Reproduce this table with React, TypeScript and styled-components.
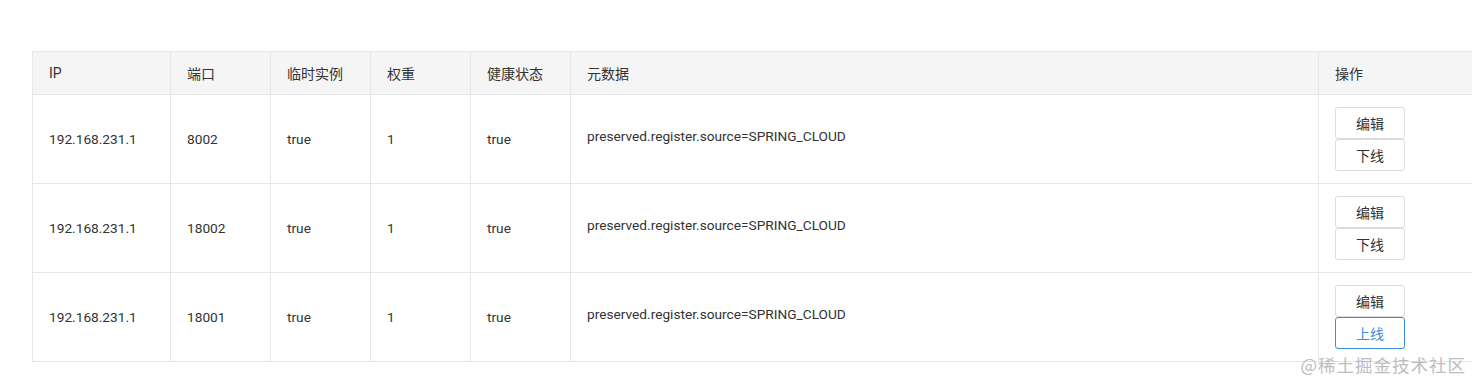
import styled, { createGlobalStyle } from "styled-components";

interface InstanceType {
  ip: string;
  port: number;
  ephemeral: boolean;
  weight: number;
  healthy: boolean;
  metadata: string;
  enabled: boolean;
}

const instances: InstanceType[] = [
  { ip: "192.168.231.1", port: 8002, ephemeral: true, weight: 1, healthy: true, metadata: "preserved.register.source=SPRING_CLOUD", enabled: true },
  { ip: "192.168.231.1", port: 18002, ephemeral: true, weight: 1, healthy: true, metadata: "preserved.register.source=SPRING_CLOUD", enabled: true },
  { ip: "192.168.231.1", port: 18001, ephemeral: true, weight: 1, healthy: true, metadata: "preserved.register.source=SPRING_CLOUD", enabled: false },
];

const columns = [
  { title: "IP", width: 138 },
  { title: "端口", width: 100 },
  { title: "临时实例", width: 100 },
  { title: "权重", width: 100 },
  { title: "健康状态", width: 100 },
  { title: "元数据", width: 748 },
  { title: "操作", width: 200 },
];

const GlobalStyle = createGlobalStyle`
  html, body {
    margin: 0;
    padding: 0;
    background: #ffffff;
    overflow: hidden;
  }
  body {
    font-family: Roboto, "Noto Sans CJK SC", sans-serif;
    color: #333333;
  }
`;

export default function App() {
  return (
    <Page>
      <GlobalStyle />
      <Table>
        <colgroup>
          {columns.map((col) => (
            <col key={col.title} style={{ width: col.width }} />
          ))}
        </colgroup>
        <thead>
          <tr>
            {columns.map((col) => (
              <HeadCell key={col.title}>{col.title}</HeadCell>
            ))}
          </tr>
        </thead>
        <tbody>
          {instances.map((item) => (
            <tr key={item.port}>
              <Cell>{item.ip}</Cell>
              <Cell>{item.port}</Cell>
              <Cell>{String(item.ephemeral)}</Cell>
              <Cell>{item.weight}</Cell>
              <Cell>{String(item.healthy)}</Cell>
              <Cell>
                <Metadata>{item.metadata}</Metadata>
              </Cell>
              <Cell>
                <Actions>
                  <ActionButton>编辑</ActionButton>
                  <ActionButton $primary={!item.enabled}>
                    {item.enabled ? "下线" : "上线"}
                  </ActionButton>
                </Actions>
              </Cell>
            </tr>
          ))}
        </tbody>
      </Table>
      <Watermark>@稀土掘金技术社区</Watermark>
    </Page>
  );
}

const Page = styled.div`
  position: relative;
  width: 1472px;
  height: 384px;
  padding: 51px 0 0 32px;
  box-sizing: border-box;
  overflow: hidden;
`;

const Table = styled.table`
  width: 1486px;
  table-layout: fixed;
  border-collapse: collapse;
  font-size: 13.7px;
`;

const HeadCell = styled.th`
  height: 43px;
  padding: 0 16px;
  box-sizing: border-box;
  background: #f5f5f5;
  border: 1px solid #e6e6e6;
  font-weight: normal;
  font-size: 14px;
  text-align: left;
  color: #333333;
  font-family: Roboto, "Noto Sans CJK SC", sans-serif;
`;

const Cell = styled.td`
  height: 89px;
  padding: 0 16px 1px;
  box-sizing: border-box;
  border: 1px solid #e6e6e6;
  vertical-align: middle;
  color: #333333;
`;

const Metadata = styled.div`
  padding-bottom: 6px;
`;

const Actions = styled.div`
  display: flex;
  flex-direction: column;
  align-items: flex-start;
  gap: 0;
`;

const ActionButton = styled.button<{ $primary?: boolean }>`
  width: 70px;
  height: 32px;
  padding: 0;
  box-sizing: border-box;
  background: #ffffff;
  border: 1px solid ${({ $primary }) => ($primary ? "#3a8ee0" : "#dcdcdc")};
  border-radius: 3px;
  color: ${({ $primary }) => ($primary ? "#3a8ee0" : "#333333")};
  font-size: 14px;
  font-family: Roboto, "Noto Sans CJK SC", sans-serif;
  cursor: pointer;
`;

const Watermark = styled.div`
  position: absolute;
  right: 6px;
  bottom: 7px;
  font-family: "Noto Sans CJK SC", sans-serif;
  font-size: 17.5px;
  color: #bdbdbd;
  letter-spacing: 1px;
`;
